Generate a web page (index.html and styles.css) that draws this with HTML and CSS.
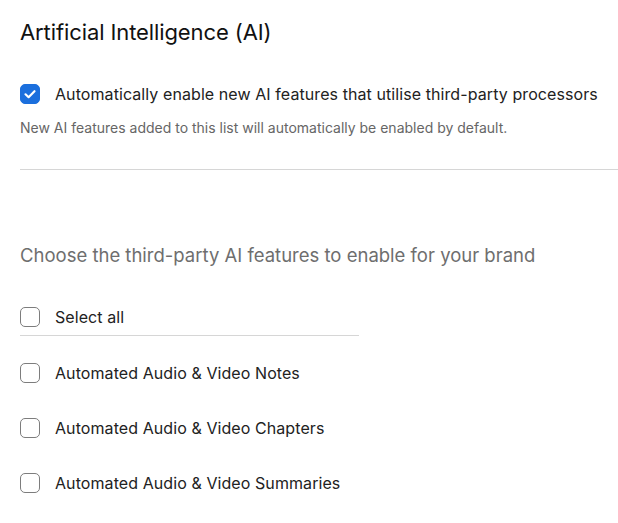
FILE: index.html
```html
<!DOCTYPE html>
<html>
<head>
<meta charset="utf-8">
<link rel="stylesheet" href="styles.css">
</head>
<body>
<main class="page">
  <h1 class="title">Artificial Intelligence (AI)</h1>
  <div class="option">
    <label class="check-row">
      <span class="box checked">
        <svg viewBox="0 0 20 20" width="20" height="20"><path d="M5.5 10.3 L8.6 13.2 L14.5 7.2" fill="none" stroke="#fff" stroke-width="2.2" stroke-linecap="round" stroke-linejoin="round"/></svg>
      </span>
      <span class="label">Automatically enable new AI features that utilise third-party processors</span>
    </label>
    <p class="help">New AI features added to this list will automatically be enabled by default.</p>
  </div>
  <hr class="divider">
  <h2 class="subtitle">Choose the third-party AI features to enable for your brand</h2>
  <div class="features">
    <label class="check-row select-all">
      <span class="box"></span>
      <span class="label">Select all</span>
    </label>
    <label class="check-row item first">
      <span class="box"></span>
      <span class="label">Automated Audio &amp; Video Notes</span>
    </label>
    <label class="check-row item">
      <span class="box"></span>
      <span class="label">Automated Audio &amp; Video Chapters</span>
    </label>
    <label class="check-row item">
      <span class="box"></span>
      <span class="label">Automated Audio &amp; Video Summaries</span>
    </label>
  </div>
</main>
</body>
</html>
```
FILE: styles.css
```css
* { box-sizing: border-box; }
html, body { margin: 0; padding: 0; background: #fff; }
body {
  font-family: Inter, "Liberation Sans", sans-serif;
  color: #1d1d1f;
  width: 618px;
  height: 523px;
  overflow: hidden;
}
.page {
  padding: 18px 0 0 20px;
}
.title {
  margin: 0;
  font-size: 22px;
  font-weight: 400;
  line-height: 28px;
  color: #111;
  letter-spacing: -0.1px;
}
.option {
  margin-top: 38px;
}
.check-row {
  display: flex;
  align-items: center;
  gap: 15px;
  height: 20px;
}
.box {
  width: 20px;
  height: 20px;
  flex: none;
  border: 1.5px solid #7d7d7d;
  border-radius: 5px;
  background: #fff;
  display: flex;
  align-items: center;
  justify-content: center;
}
.box.checked {
  background: #1b6fdd;
  border-color: #1b6fdd;
}
.box.checked svg { flex: none; margin: -2px; }
.label {
  font-size: 16px;
  line-height: 20px;
  color: #222;
  letter-spacing: 0.08px;
}
.help {
  margin: 15px 0 0;
  font-size: 14px;
  line-height: 18px;
  color: #666;
}
.divider {
  margin: 32px 0 0;
  border: 0;
  border-top: 1px solid #d6d6d6;
  height: 0;
}
.subtitle {
  margin: 73px 0 0;
  font-size: 18.5px;
  font-weight: 400;
  line-height: 24px;
  color: #6e6e6e;
}
.features {
  margin-top: 40px;
  display: flex;
  flex-direction: column;
}
.select-all {
  width: 339px;
  height: 29px;
  padding-bottom: 8px;
  border-bottom: 1px solid #d6d6d6;
  align-items: flex-start;
}
.item {
  margin-top: 35px;
}
.item.first {
  margin-top: 27px;
}
```
